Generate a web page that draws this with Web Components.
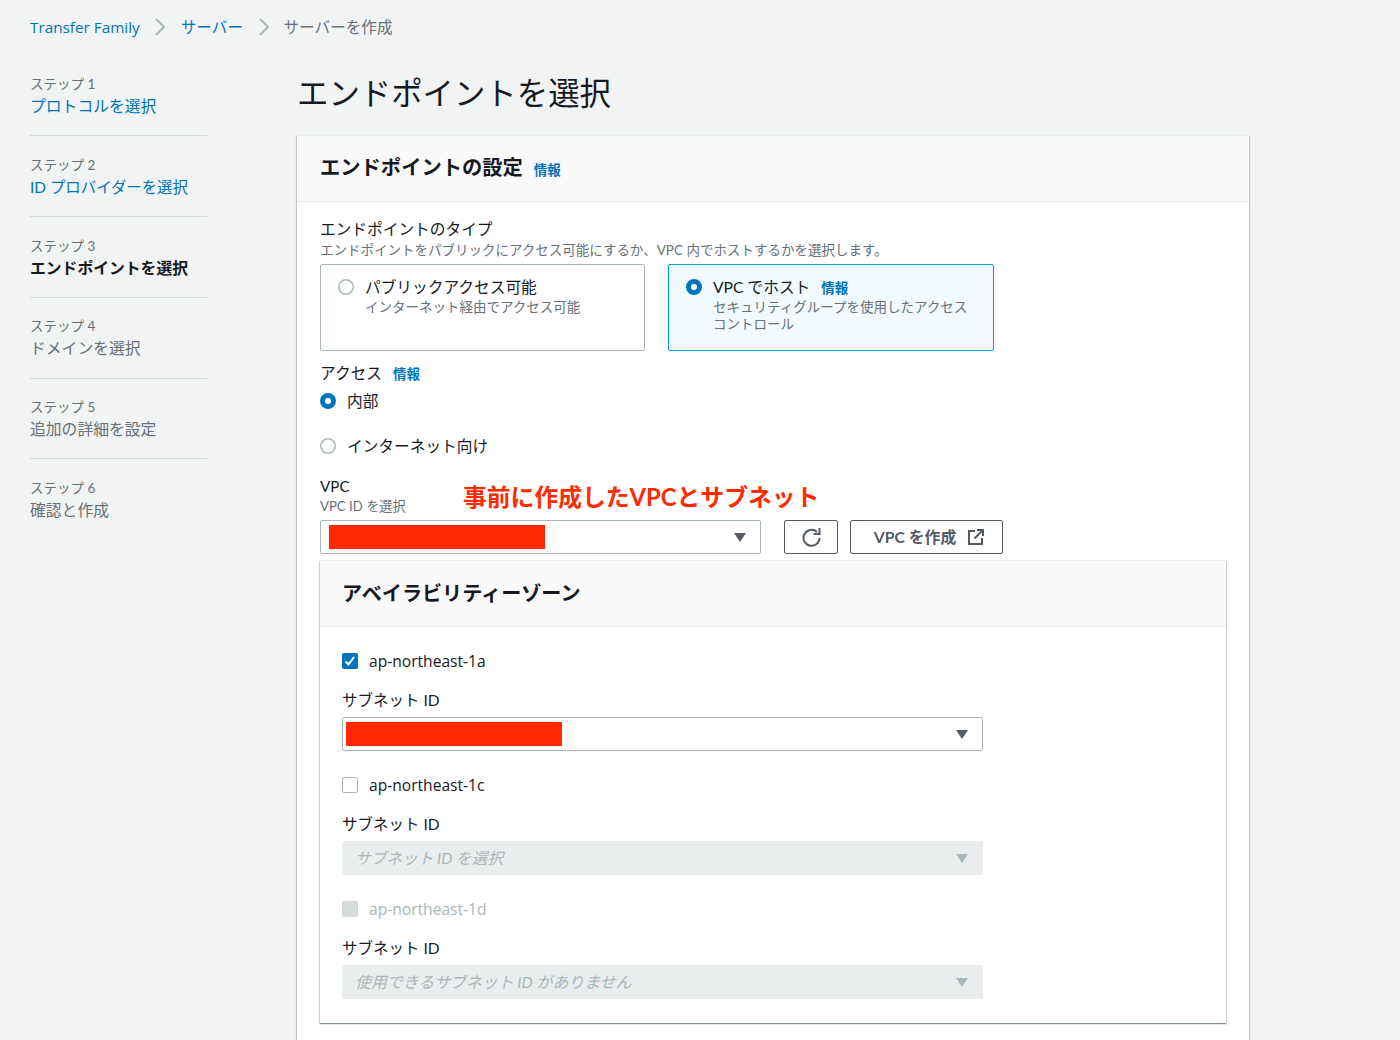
<!DOCTYPE html>
<html lang="ja"><head><meta charset="utf-8"><title>サーバーを作成</title>
<style>
html,body{margin:0;height:1040px;overflow:hidden;background:#f2f3f3;color:#16191f;font:15.7px/22px Lato,"Noto Sans CJK JP",sans-serif}
</style></head><body>
<aws-page>
  <aws-crumbs slot="crumbs"></aws-crumbs>
  <aws-steps slot="nav"></aws-steps>
  <aws-title slot="title">エンドポイントを選択</aws-title>
  <aws-card slot="main" outer>
    <span slot="head">エンドポイントの設定</span><aws-info slot="info"></aws-info>
    <aws-field label="エンドポイントのタイプ" desc="エンドポイントをパブリックにアクセス可能にするか、VPC 内でホストするかを選択します。"></aws-field>
    <aws-tiles>
      <aws-tile label="パブリックアクセス可能" sub="インターネット経由でアクセス可能"></aws-tile>
      <aws-tile selected info label="VPC でホスト" sub="セキュリティグループを使用したアクセス&#10;コントロール"></aws-tile>
    </aws-tiles>
    <aws-field style="margin-top:11px" label="アクセス" info></aws-field>
    <aws-radio style="margin-top:6px" checked>内部</aws-radio>
    <aws-radio style="margin-top:23px">インターネット向け</aws-radio>
    <aws-vpc></aws-vpc>
    <aws-card inner style="margin-top:6px">
      <span slot="head">アベイラビリティーゾーン</span>
      <aws-zone name="ap-northeast-1a" state="checked"><aws-select redact wide></aws-select></aws-zone>
      <aws-zone name="ap-northeast-1c"><aws-select disabled wide placeholder="サブネット ID を選択"></aws-select></aws-zone>
      <aws-zone name="ap-northeast-1d" state="disabled"><aws-select disabled wide style="font-size:15.9px" placeholder="使用できるサブネット ID がありません"></aws-select></aws-zone>
    </aws-card>
  </aws-card>
</aws-page>
<script>
const C={link:'#0073bb',text:'#16191f',gray:'#687078',dis:'#aab7b8',line:'#aab7b8'};
const shadow=(el,html)=>{const s=el.attachShadow({mode:'open'});s.innerHTML=html;return s};
customElements.define('aws-page',class extends HTMLElement{constructor(){super();shadow(this,`<style>
:host{display:block}
.grid{display:grid;grid-template-columns:177px 952px;column-gap:90px;padding-left:30px}
.side{padding-top:19px}
</style><slot name="crumbs"></slot><div class="grid"><div class="side"><slot name="nav"></slot></div><div><slot name="title"></slot><slot name="main"></slot></div></div>`)}});
customElements.define('aws-crumbs',class extends HTMLElement{constructor(){super();
const ch=(l,r)=>`<svg style="margin:0 ${r}px 0 ${l}px" width="10" height="18" viewBox="0 0 10 18"><path d="M1 1l8 8-8 8" fill="none" stroke="#aab7b8" stroke-width="2"/></svg>`;
shadow(this,`<style>
:host{display:flex;align-items:center;height:54px;padding-left:30px;font-size:15.6px}
span{color:${C.link}} b{font-weight:400;color:${C.gray}}
.lat{font-family:"Open Sans","Noto Sans CJK JP",sans-serif;font-size:15.300px}
</style><span class="lat">Transfer Family</span>${ch(15,16)}<span>サーバー</span>${ch(15.5,15)}<b>サーバーを作成</b>`)}});
customElements.define('aws-steps',class extends HTMLElement{constructor(){super();
const d=[['ステップ 1','プロトコルを選択','l'],['ステップ 2','ID プロバイダーを選択','l id'],['ステップ 3','エンドポイントを選択','c'],['ステップ 4','ドメインを選択','d'],['ステップ 5','追加の詳細を設定','d'],['ステップ 6','確認と作成','d']];
shadow(this,`<style>
:host{display:block}
.s{border-bottom:1px solid #d5dbdb;padding:17.5px 0 18.250px}
.s:first-of-type{padding-top:0}
.s:last-of-type{border:0}
.n{font-size:13.5px;line-height:22px;height:22px;color:${C.gray}}
.t{font-size:15.8px;line-height:22px;height:22px}
.id{font-size:15.4px}
.l{color:${C.link}}.c{color:${C.text};font-weight:700}.d{color:${C.gray}}
</style>`+d.map(x=>`<div class="s"><div class="n">${x[0]}</div><div class="t ${x[2]}">${x[1]}</div></div>`).join(''))}});
customElements.define('aws-title',class extends HTMLElement{constructor(){super();shadow(this,`<style>
:host{display:block;font-size:31.4px;line-height:78px;margin-bottom:3px;color:${C.text}}
</style><slot></slot>`)}});
customElements.define('aws-info',class extends HTMLElement{constructor(){super();shadow(this,`<style>
:host{display:inline-block;font-size:13.5px;font-weight:700;color:${C.link};margin-left:11px}
</style>情報`)}});
customElements.define('aws-card',class extends HTMLElement{constructor(){super();shadow(this,`<style>
:host{display:block;background:#fff;box-shadow:0 1px 1px rgba(0,28,36,.3),1px 1px 1px rgba(0,28,36,.15),-1px 1px 1px rgba(0,28,36,.15);border-top:1px solid #eaeded}
.h{height:66px;box-sizing:border-box;display:flex;align-items:center;padding:0 22px 4px 23px;background:#fafafa;border-bottom:1px solid #eaeded;font-size:20.3px;font-weight:700}
.b{padding:16px 23px 24px 23px}
:host([inner]) .b{padding:23px 22px 24px 22px}
:host([inner]) .h{padding:0 22px 2px;font-size:20.1px}
::slotted(aws-info){margin-top:6px}
</style><div class="h"><slot name="head"></slot><slot name="info"></slot></div><div class="b"><slot></slot></div>`)}});
customElements.define('aws-field',class extends HTMLElement{constructor(){super();
const d=this.getAttribute('desc');
shadow(this,`<style>
:host{display:block}
.m{height:22px}
.d{font-size:13.5px;line-height:20px;color:${C.gray}}
</style><div class="m">${this.getAttribute('label')}${this.hasAttribute('info')?'<aws-info></aws-info>':''}</div>${d?`<div class="d">${d}</div>`:''}`)}});
customElements.define('aws-tiles',class extends HTMLElement{constructor(){super();shadow(this,`<style>
:host{display:grid;grid-template-columns:325px 326px;column-gap:23px;margin-top:4px;width:674px}
</style><slot></slot>`)}});
const dot=(on)=>on?`<svg width="16" height="16" viewBox="0 0 16 16" style="flex:none"><circle cx="8" cy="8" r="5.5" fill="#fff" stroke="#0073bb" stroke-width="5"/></svg>`:`<svg width="16" height="16" viewBox="0 0 16 16" style="flex:none"><circle cx="8" cy="8" r="7.250" fill="#fff" stroke="#aab7b8" stroke-width="1.500"/></svg>`;
customElements.define('aws-tile',class extends HTMLElement{constructor(){super();
const on=this.hasAttribute('selected');
shadow(this,`<style>
:host{display:flex;box-sizing:border-box;height:87px;padding:11px 17px;gap:11px;border:1px solid ${on?'#00a1c9':'#aab7b8'};border-radius:2px;background:${on?'#f1faff':'#fff'}}
svg{margin-top:3px}
.m{height:22px}
.s{font-size:13.5px;line-height:17px;color:${C.gray};white-space:pre-line;margin-top:1px}
</style>${dot(on)}<div><div class="m">${this.getAttribute('label')}${this.hasAttribute('info')?'<aws-info></aws-info>':''}</div><div class="s">${this.getAttribute('sub')}</div></div>`)}});
customElements.define('aws-radio',class extends HTMLElement{constructor(){super();shadow(this,`<style>
:host{display:flex;align-items:center;gap:11px;height:22px}
</style>${dot(this.hasAttribute('checked'))}<slot></slot>`)}});
customElements.define('aws-select',class extends HTMLElement{constructor(){super();
const dis=this.hasAttribute('disabled'),red=this.hasAttribute('redact'),ph=this.getAttribute('placeholder')||'',wide=this.hasAttribute('wide');
shadow(this,`<style>
:host{display:flex;align-items:center;box-sizing:border-box;height:34px;width:${wide?'641px':'441px'};flex:none;border:1px solid ${dis?'#eaeded':C.line};border-radius:2px;background:${dis?'#eaeded':'#fff'};padding-right:14px}
.t{flex:1;padding-left:12px;font-style:italic;color:${C.dis}}
.r{width:216px;height:24px;background:#ff2a00;margin-left:var(--red-left,3px)}
.sp{flex:1}
svg{flex:none}
</style>${red?'<div class="r"></div><div class="sp"></div>':`<div class="t">${ph}</div>`}<svg width="12" height="9" viewBox="0 0 12 9"><path d="M0 0h12L6 9z" fill="${dis?C.dis:'#545b64'}"/></svg>`)}});
customElements.define('aws-button',class extends HTMLElement{constructor(){super();shadow(this,`<style>
:host{display:flex;align-items:center;justify-content:center;box-sizing:border-box;height:34px;gap:12px;border:1px solid #545b64;border-radius:2px;color:#545b64;font-size:15.8px;font-weight:700;background:#fff}
</style><slot></slot>`)}});
customElements.define('aws-vpc',class extends HTMLElement{constructor(){super();shadow(this,`<style>
:host{display:block;position:relative;margin-top:18px}
.v{font-size:15.200px;height:22px}
.s{font-size:13.2px;line-height:19px;height:19px;color:${C.gray};margin-bottom:4px}
.row{display:flex}
.note{position:absolute;left:143px;top:6px;font-size:23.8px;line-height:32px;font-weight:700;color:#ff2a00;white-space:nowrap}
aws-select{--red-left:8px}
</style><div class="v">VPC</div><div class="s">VPC ID を選択</div><div class="note">事前に作成したVPCとサブネット</div>
<div class="row"><aws-select redact></aws-select>
<aws-button style="width:54px;margin-left:23px"><svg width="20" height="20" viewBox="0 0 20 20" fill="none" stroke="#545b64" stroke-width="2"><path d="M16 5A8 8 0 1 0 18.500 11"/><path d="M18.500 1v6h-6"/></svg></aws-button>
<aws-button style="width:153px;margin-left:12px;padding-left:5px">VPC を作成<svg width="16" height="16" viewBox="0 0 16 16" fill="none" stroke="#545b64" stroke-width="2"><path d="M7 2H1v13h13V9"/><path d="M6.500 9.500L14.500 1.500M9 1h6v6"/></svg></aws-button></div>`)}});
customElements.define('aws-zone',class extends HTMLElement{constructor(){super();
const st=this.getAttribute('state');
const box=st==='checked'?`<svg width="16" height="16" viewBox="0 0 16 16"><rect width="16" height="16" rx="2" fill="#0073bb"/><path d="M3.500 8.500l3 3L12 4" fill="none" stroke="#fff" stroke-width="2"/></svg>`:st==='disabled'?`<svg width="16" height="16" viewBox="0 0 16 16"><rect width="16" height="16" rx="2" fill="#d5dbdb"/></svg>`:`<svg width="16" height="16" viewBox="0 0 16 16"><rect x=".5" y=".5" width="15" height="15" rx="1.500" fill="#fff" stroke="#aab7b8"/></svg>`;
shadow(this,`<style>
:host{display:block;margin-bottom:23px}
:host(:last-child){margin-bottom:0}
.c{display:flex;align-items:center;gap:11px;height:22px;color:${st==='disabled'?C.dis:C.text}}
.c span{font-family:"Open Sans",sans-serif;font-size:15.600px}
.l{margin:17px 0 6px;height:22px;font-size:15.5px}
</style><div class="c">${box}<span>${this.getAttribute('name')}</span></div><div class="l">サブネット ID</div><slot></slot>`)}});
</script></body></html>
